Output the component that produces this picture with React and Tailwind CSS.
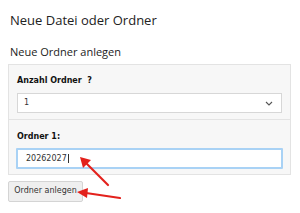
import React from "react";

export default function App() {
  return (
    <div className="relative w-[300px] h-[213px] bg-white overflow-hidden text-[#333]" style={{ fontFamily: "'Open Sans', sans-serif" }}>
      <div className="pl-[8px] pr-[9px] pt-[12px]">
        <h1 className="pl-[2px] text-[13px] leading-[16px] font-normal text-[#222]">Neue Datei oder Ordner</h1>
        <h2 className="pl-[2px] mt-[17px] text-[11px] leading-[14px] font-normal text-[#222]">Neue Ordner anlegen</h2>
        <div className="mt-[5px] border border-[#e3e3e3] bg-[#f7f7f7]" style={{ fontFamily: "'DejaVu Sans', Verdana, sans-serif" }}>
          <div className="px-[8px] pt-[11px] pb-[6px] border-b border-[#e3e3e3]">
            <div className="text-[8px] leading-[10px] font-bold text-[#111]">Anzahl Ordner&nbsp;&nbsp;?</div>
            <div className="mt-[7px] h-[20px] bg-white border border-[#d7d7d7] flex items-center justify-between pl-[6px] pr-[8px]">
              <span className="text-[8px] text-[#333]">1</span>
              <svg width="8" height="5" viewBox="0 0 8 5" fill="none" stroke="#555" strokeWidth="1.1">
                <path d="M1 1l3 3 3-3" />
              </svg>
            </div>
          </div>
          <div className="px-[7px] pt-[12px] pb-[5px]">
            <div className="pl-[1px] text-[8px] leading-[10px] font-bold text-[#111]">Ordner 1:</div>
            <div className="mt-[6px] h-[21px] bg-white border-2 border-[#a9d2f5] rounded-[1px] flex items-center pl-[8px]">
              <span className="text-[8px] text-[#333]">20262027</span>
              <span className="w-px h-[9px] bg-[#333] ml-[1px]" />
            </div>
          </div>
        </div>
        <button className="mt-[5px] h-[21px] w-[75px] bg-[#efefef] border border-[#d4d4d4] rounded-[2px] text-[8px] text-[#333]" style={{ fontFamily: "'DejaVu Sans', Verdana, sans-serif" }}>
          Ordner anlegen
        </button>
      </div>
      <svg className="absolute left-0 top-0" width="300" height="213" viewBox="0 0 300 213">
        <g stroke="#e3211c" strokeWidth="2.2" strokeLinecap="round" fill="#e3211c">
          <line x1="108" y1="185" x2="86" y2="163" />
          <polygon points="80,157 91,160 83,168" stroke="none" />
          <line x1="120" y1="198" x2="86" y2="193" />
          <polygon points="77,192 88,188 87,198" stroke="none" />
        </g>
      </svg>
    </div>
  );
}
